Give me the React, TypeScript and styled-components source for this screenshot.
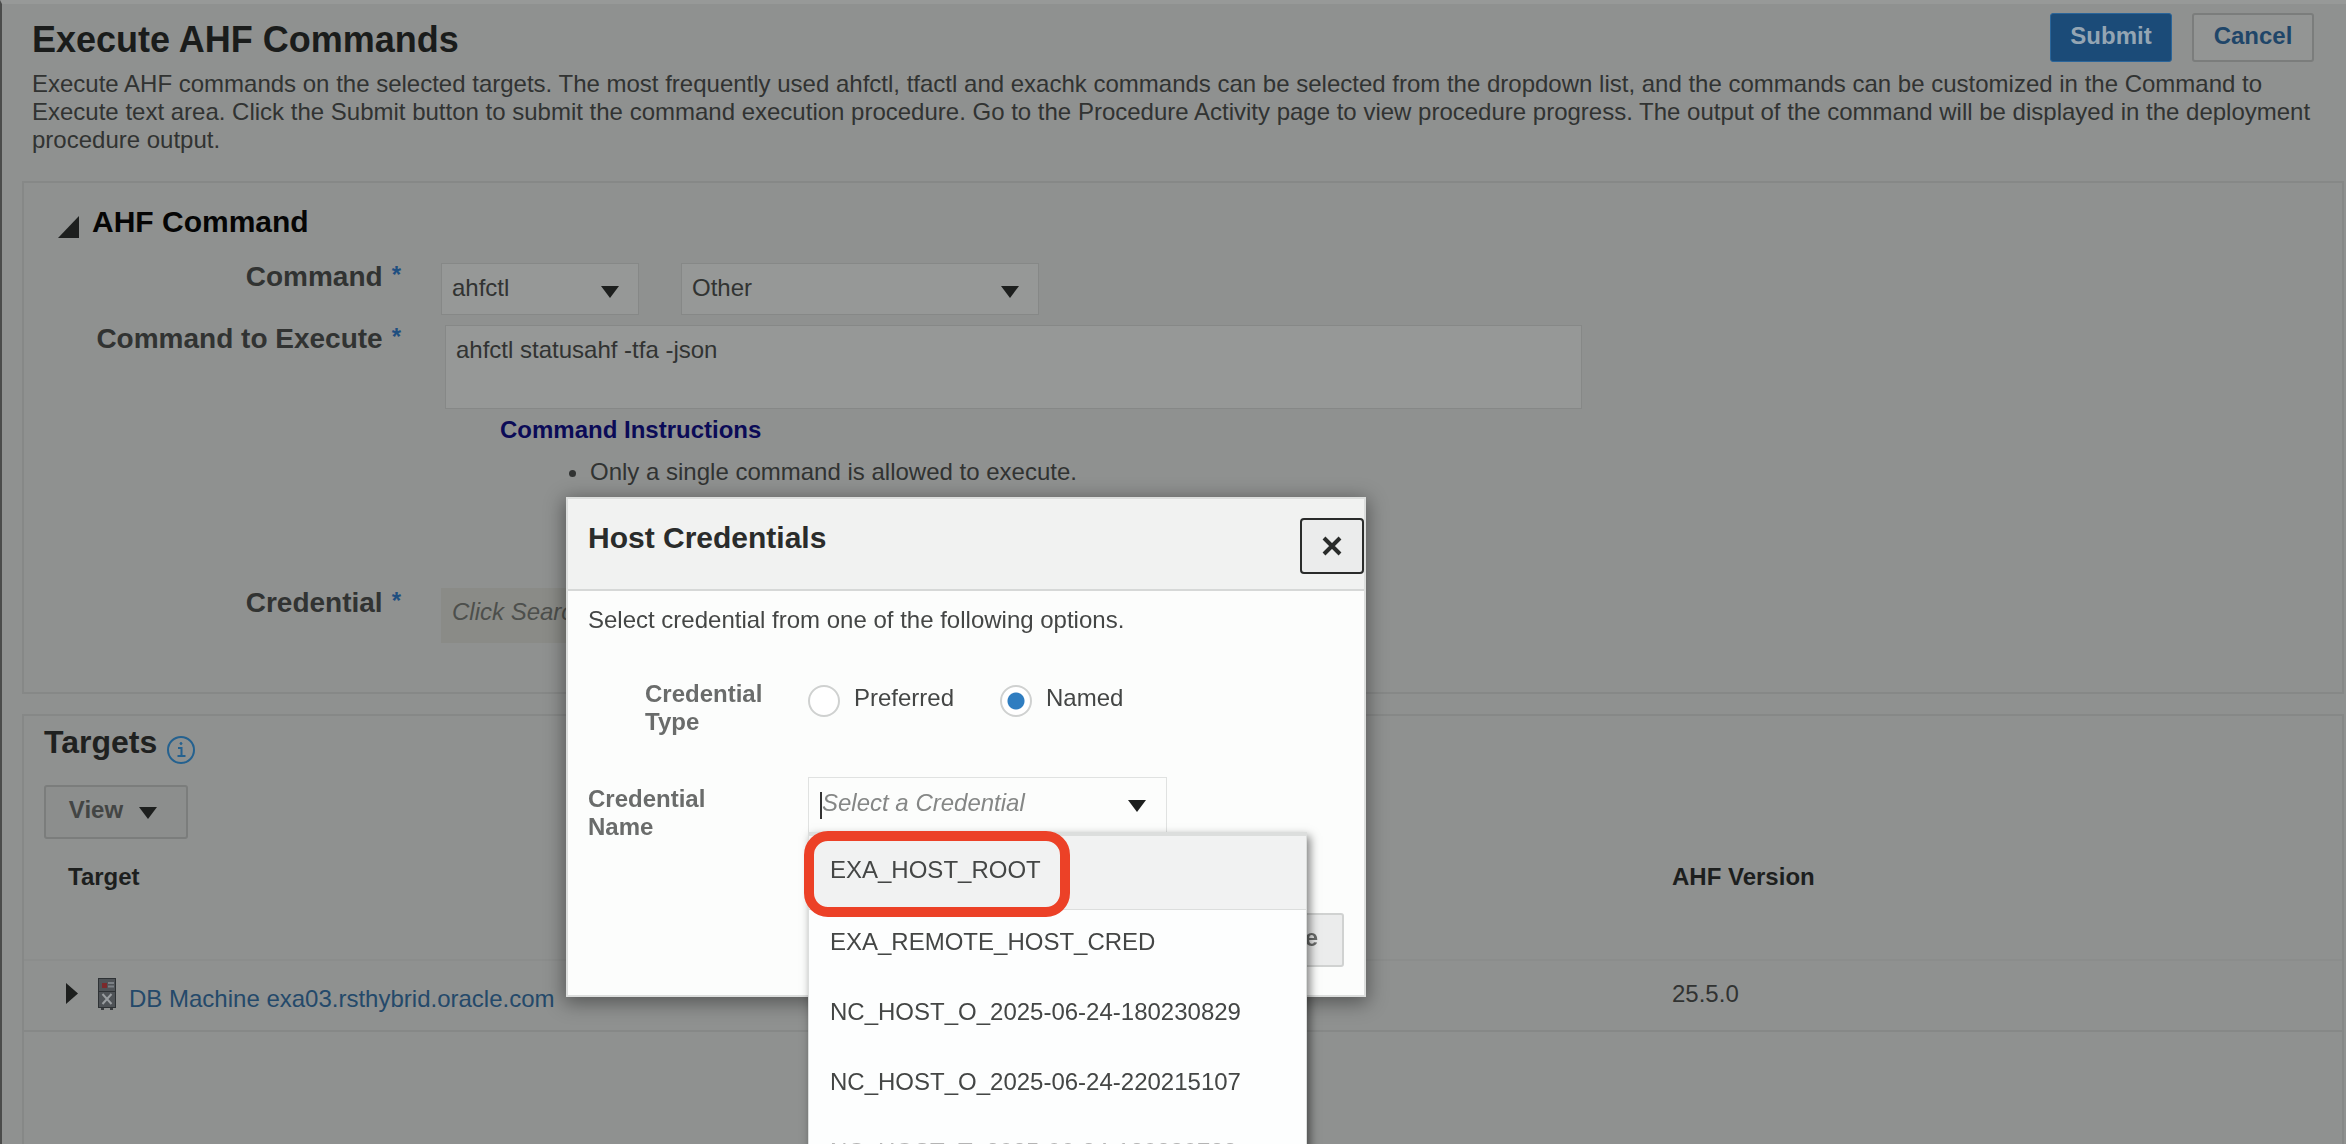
import React from "react";
import styled, { createGlobalStyle, css } from "styled-components";

const GlobalStyle = createGlobalStyle`
  *, *::before, *::after { box-sizing: border-box; }
  body {
    margin: 0;
    background: #8f9190;
    color: #313332;
    font: 24px/28px "Liberation Sans", Arial, Helvetica, sans-serif;
  }
  button, input, select, textarea { font: inherit; color: inherit; margin: 0; }
  h1, h2, p, ul { margin: 0; padding: 0; }
`;

const Page = styled.main`
  display: flex;
  flex-direction: column;
  min-height: 100vh;
  border-left: 2px solid #4b4c4b;
  border-top: 4px solid #979998;
  padding: 9px 2px 0 20px;
`;

const Header = styled.header`
  display: flex;
  justify-content: space-between;
  align-items: flex-start;
  padding: 0 30px 0 10px;
`;

const Title = styled.h1`
  margin-top: 7px;
  font-size: 36px;
  line-height: 40px;
  color: #1a1c1b;
`;

const Actions = styled.div`
  display: flex;
  gap: 20px;
`;

const ActionButton = styled.button<{ $primary?: boolean }>`
  width: 122px;
  height: 49px;
  padding: 0 0 4px;
  border-radius: 3px;
  font-weight: bold;
  ${(p) =>
    p.$primary
      ? css`
          border: 1px solid #2a659a;
          background: #1b4b78;
          color: #94a5b3;
        `
      : css`
          border: 2px solid #7b7d7c;
          background: #939594;
          color: #1f4669;
        `}
`;

const Description = styled.p`
  margin-top: 8px;
  padding: 0 30px 0 10px;
`;

const Panel = styled.section<{ $fill?: boolean }>`
  border: 2px solid #868887;
  ${(p) =>
    p.$fill
      ? css`
          flex: 1;
          margin-top: 20px;
          border-bottom: 0;
          padding-top: 8px;
        `
      : css`
          margin-top: 27px;
          padding: 21px 0 49px;
        `}
`;

const Disclosure = styled.h2`
  display: flex;
  align-items: flex-end;
  gap: 13px;
  padding-left: 34px;
  font-size: 30px;
  line-height: 36px;
  color: #050505;

  svg { margin-bottom: 2px; }
`;

const Form = styled.div`
  display: grid;
  grid-template-columns: 377px 1fr;
  column-gap: 40px;
  row-gap: 8px;
  margin-top: 21px;
`;

const FieldLabel = styled.label<{ $spaced?: boolean }>`
  display: flex;
  justify-content: flex-end;
  align-items: flex-start;
  gap: 9px;
  padding-top: ${(p) => (p.$spaced ? 93 : 0)}px;
  font-size: 28px;
  line-height: 32px;
  font-weight: bold;
`;

const Required = styled.span`
  font-size: 24px;
  line-height: 28px;
  color: #1f4f80;
`;

const Field = styled.div<{ $spaced?: boolean }>`
  display: flex;
  gap: 42px;
  padding-top: ${(p) => (p.$spaced ? 94 : 2)}px;
`;

const SelectBox = styled.span<{ $wide?: boolean }>`
  display: grid;
  align-items: center;
  width: ${(p) => (p.$wide ? 358 : 198)}px;

  > * { grid-area: 1 / 1; }
  svg { justify-self: end; margin: 6px 20px 0 0; pointer-events: none; }
`;

const Select = styled.select`
  appearance: none;
  width: 100%;
  height: 52px;
  padding: 0 44px 2px 10px;
  border: 1px solid #868887;
  border-radius: 0;
  background: #969897;
`;

const CommandField = styled.div`
  padding: 2px 0 0 4px;
`;

const CommandText = styled.textarea`
  display: block;
  width: calc(100% - 760px);
  min-width: 600px;
  height: 84px;
  padding: 10px;
  border: 1px solid #868887;
  background: #969897;
  resize: none;
`;

const Instructions = styled.div`
  padding: 7px 0 0 55px;
  color: #0b0b57;

  ul {
    margin-top: 14px;
    padding-left: 90px;
    color: #313332;
  }
`;

const CredentialInput = styled.input`
  width: 420px;
  height: 55px;
  padding: 0 10px 8px;
  border: 1px solid #8a8b87;
  background: #8a8b87;
  font-style: italic;
  &::placeholder { color: #4d4f4c; opacity: 1; }
`;

const TargetsTitle = styled.h2`
  display: flex;
  align-items: flex-start;
  gap: 9px;
  padding-left: 20px;
  font-size: 32px;
  line-height: 36px;
  color: #1f2120;

  svg { margin-top: 11px; }
`;

const ViewButton = styled.button`
  display: flex;
  align-items: center;
  justify-content: center;
  gap: 16px;
  width: 144px;
  height: 54px;
  margin: 20px 0 0 20px;
  padding: 0 6px 4px 0;
  border: 2px solid #7b7d7c;
  border-radius: 3px;
  background: #8c8e8d;
  color: #434544;
  font-weight: bold;

  svg { margin-top: 6px; color: #1d1f1e; }
`;

const Table = styled.table`
  width: 100%;
  table-layout: fixed;
  border-collapse: collapse;

  th {
    padding: 24px 0 68px;
    text-align: left;
    color: #1d1f1e;
  }
  th:first-child { padding-left: 44px; }
  th:last-child { width: 670px; }
  td {
    height: 71px;
    padding: 0 0 4px;
    border-top: 2px solid #8b8d8c;
    border-bottom: 2px solid #868887;
  }
`;

const TargetCell = styled.div`
  display: flex;
  align-items: center;
  padding-left: 42px;

  a {
    margin-left: 13px;
    padding-top: 10px;
    color: #24496a;
    text-decoration: none;
  }
`;

const Expander = styled.button`
  display: flex;
  margin-right: 20px;
  padding: 0;
  border: 0;
  background: none;
  color: #1d1f1e;
`;

const Overlay = styled.div`
  position: fixed;
  inset: 0;
  overflow: hidden;
  padding: 497px 0 0 566px;
`;

const Dialog = styled.section`
  width: 800px;
  border: 2px solid #dcdedd;
  background: #fcfdfc;
  color: #444645;
  box-shadow: 0 4px 18px 2px rgba(0, 0, 0, 0.4);
`;

const DialogHeader = styled.header`
  display: flex;
  justify-content: space-between;
  align-items: center;
  height: 92px;
  padding-left: 20px;
  border-bottom: 2px solid #d6d8d7;
  background: #f1f2f1;

  h2 {
    padding-bottom: 12px;
    font-size: 30px;
    line-height: 36px;
    color: #2a2c2b;
  }
`;

const CloseButton = styled.button`
  display: grid;
  place-items: center;
  width: 64px;
  height: 56px;
  margin-top: 4px;
  padding: 0;
  border: 2px solid #2a2c2b;
  border-radius: 4px;
  background: #ebecec;
`;

const DialogBody = styled.div`
  padding: 15px 20px 28px;
`;

const CredentialRow = styled.div<{ $indent?: boolean }>`
  display: grid;
  grid-template-columns: ${(p) => (p.$indent ? 163 : 220)}px 1fr;
  align-items: start;
  margin: ${(p) => (p.$indent ? "46px 0 0 57px" : "41px 0 0")};
  color: #6a6c6b;
  font-weight: bold;
`;

const RowLabel = styled.label`
  width: 140px;
  padding-top: 8px;
`;

const GroupLabel = styled.div`
  width: 140px;
`;

const Radios = styled.div`
  display: flex;
  gap: 44px;
  padding-top: 4px;
`;

const RadioLabel = styled.label`
  display: flex;
  align-items: center;
  gap: 14px;
  width: 148px;
  color: #444645;
  font-weight: normal;

  span { padding-bottom: 5px; }
`;

const Radio = styled.input`
  appearance: none;
  flex: none;
  width: 32px;
  height: 32px;
  border: 2px solid #cfd1d0;
  border-radius: 50%;
  background: #fff;

  &:checked { background: radial-gradient(circle, #2f7dc0 8px, #fff 9px); }
`;

const Combo = styled.div`
  position: relative;
  width: 359px;
  color: #333534;
  font-weight: normal;
`;

const ComboBox = styled.div`
  display: flex;
  align-items: center;
  height: 56px;
  padding: 0 20px 0 11px;
  border: 1px solid #e0e2e1;
  background: #fcfdfc;

  svg { margin-top: 2px; }
`;

const Caret = styled.span`
  width: 2px;
  height: 27px;
  background: #333;
`;

const ComboInput = styled.input`
  flex: 1;
  min-width: 0;
  padding: 0 0 5px;
  border: 0;
  outline: 0;
  background: none;
  font-style: italic;
  &::placeholder { color: #858786; opacity: 1; }
`;

const Options = styled.ul`
  position: absolute;
  top: 55px;
  left: 0;
  width: 499px;
  border: solid #dcdedd;
  border-width: 4px 1px 0;
  background: #fdfefe;
  box-shadow: 3px 4px 9px rgba(0, 0, 0, 0.5);
  list-style: none;
`;

const Option = styled.li<{ $active?: boolean; $faded?: boolean }>`
  height: 70px;
  padding: 18px 21px 0;
  color: ${(p) => (p.$faded ? "#b4b4b4" : "#444645")};
  ${(p) =>
    p.$active &&
    css`
      height: 74px;
      padding-top: 20px;
      border-bottom: 1px solid #dcdedd;
      background: #f1f2f2;
    `}
`;

const Highlight = styled.span`
  position: absolute;
  top: -5px;
  left: -5px;
  width: 266px;
  height: 86px;
  border: 10px solid #ec4127;
  border-radius: 24px;
  pointer-events: none;
`;

const DialogFooter = styled.footer`
  display: flex;
  justify-content: flex-end;
  margin-top: 72px;
`;

const FooterButton = styled.button`
  height: 54px;
  padding: 0 24px 5px;
  border: 2px solid #d0d2d1;
  border-radius: 3px;
  background: #ebecec;
  color: #6a6c6b;
  font-weight: bold;
`;

const DownArrow = () => (
  <svg width="18" height="12" viewBox="0 0 18 12" aria-hidden="true">
    <path d="M0 0h18L9 12z" fill="#1d1f1e" />
  </svg>
);

const InfoIcon = () => (
  <svg width="30" height="30" viewBox="0 0 30 30" fill="none" stroke="#24618f" strokeWidth="2" aria-hidden="true">
    <circle cx="15" cy="15" r="13" />
    <path d="M12 13h3.5v8M11.500 21h8" />
    <circle cx="15" cy="8.500" r="1" fill="#24618f" stroke="#24618f" strokeWidth="1" />
  </svg>
);

const MachineIcon = () => (
  <svg width="18" height="32" viewBox="0 0 18 32" aria-hidden="true">
    <path d="M3 29h3v3H3zM12 29h3v3h-3z" fill="#3a3d40" />
    <rect x="0.500" y="0.500" width="17" height="29" fill="#4f5357" stroke="#2e3235" />
    <path d="M10 5h6M10 8.500h6" stroke="#7b8085" strokeWidth="2" />
    <rect x="4" y="5" width="5" height="5" fill="#7c2a2c" />
    <path d="M1 13.500h16" stroke="#2e3235" />
    <path d="M4.500 16l9 10M13.500 16l-9 10" stroke="#999da0" strokeWidth="2" />
  </svg>
);

const credentials = [
  "EXA_HOST_ROOT",
  "EXA_REMOTE_HOST_CRED",
  "NC_HOST_O_2025-06-24-180230829",
  "NC_HOST_O_2025-06-24-220215107",
  "NC_HOST_T_2025-06-24-180230728",
];

export default function App() {
  return (
    <>
      <GlobalStyle />
      <Page>
        <Header>
          <Title>Execute AHF Commands</Title>
          <Actions>
            <ActionButton $primary>Submit</ActionButton>
            <ActionButton>Cancel</ActionButton>
          </Actions>
        </Header>
        <Description>
          Execute AHF commands on the selected targets. The most frequently used ahfctl, tfactl and exachk commands
          can be selected from the dropdown list, and the commands can be customized in the Command to Execute text
          area. Click the Submit button to submit the command execution procedure. Go to the Procedure Activity page
          to view procedure progress. The output of the command will be displayed in the deployment procedure output.
        </Description>

        <Panel>
          <Disclosure>
            <svg width="21" height="22" viewBox="0 0 21 22" aria-hidden="true">
              <path d="M21 0v22H0z" fill="#1d1f1e" />
            </svg>
            AHF Command
          </Disclosure>
          <Form>
            <FieldLabel htmlFor="command">
              Command <Required>*</Required>
            </FieldLabel>
            <Field>
              <SelectBox>
                <Select id="command">
                  <option>ahfctl</option>
                </Select>
                <DownArrow />
              </SelectBox>
              <SelectBox $wide>
                <Select aria-label="Command option">
                  <option>Other</option>
                </Select>
                <DownArrow />
              </SelectBox>
            </Field>

            <FieldLabel htmlFor="execute">
              Command to Execute <Required>*</Required>
            </FieldLabel>
            <CommandField>
              <CommandText id="execute" defaultValue="ahfctl statusahf -tfa -json" />
              <Instructions>
                <strong>Command Instructions</strong>
                <ul>
                  <li>Only a single command is allowed to execute.</li>
                </ul>
              </Instructions>
            </CommandField>

            <FieldLabel htmlFor="credential" $spaced>
              Credential <Required>*</Required>
            </FieldLabel>
            <Field $spaced>
              <CredentialInput id="credential" placeholder="Click Search" readOnly />
            </Field>
          </Form>
        </Panel>

        <Panel $fill>
          <TargetsTitle>
            Targets <InfoIcon />
          </TargetsTitle>
          <ViewButton>
            View <DownArrow />
          </ViewButton>
          <Table>
            <thead>
              <tr>
                <th>Target</th>
                <th>AHF Version</th>
              </tr>
            </thead>
            <tbody>
              <tr>
                <td>
                  <TargetCell>
                    <Expander aria-label="Expand">
                      <svg width="12" height="21" viewBox="0 0 12 21" aria-hidden="true">
                        <path d="M0 0l12 10.500L0 21z" fill="currentColor" />
                      </svg>
                    </Expander>
                    <MachineIcon />
                    <a href="#target">DB Machine exa03.rsthybrid.oracle.com</a>
                  </TargetCell>
                </td>
                <td>25.5.0</td>
              </tr>
            </tbody>
          </Table>
        </Panel>
      </Page>

      <Overlay>
        <Dialog role="dialog" aria-modal="true" aria-labelledby="dialog-title">
          <DialogHeader>
            <h2 id="dialog-title">Host Credentials</h2>
            <CloseButton aria-label="Close dialog">
              <svg width="20" height="20" viewBox="0 0 20 20" aria-hidden="true">
                <path d="M2 2l16 16M18 2L2 18" stroke="#2a2c2b" strokeWidth="4" />
              </svg>
            </CloseButton>
          </DialogHeader>
          <DialogBody>
            <p>Select credential from one of the following options.</p>
            <CredentialRow $indent role="radiogroup" aria-labelledby="type-label">
              <GroupLabel id="type-label">Credential Type</GroupLabel>
              <Radios>
                <RadioLabel>
                  <Radio type="radio" name="type" />
                  <span>Preferred</span>
                </RadioLabel>
                <RadioLabel>
                  <Radio type="radio" name="type" defaultChecked />
                  <span>Named</span>
                </RadioLabel>
              </Radios>
            </CredentialRow>
            <CredentialRow>
              <RowLabel htmlFor="credential-name">Credential Name</RowLabel>
              <Combo>
                <ComboBox>
                  <Caret />
                  <ComboInput
                    id="credential-name"
                    role="combobox"
                    aria-expanded="true"
                    aria-controls="credential-options"
                    placeholder="Select a Credential"
                  />
                  <DownArrow />
                </ComboBox>
                <Options id="credential-options" role="listbox">
                  {credentials.map((name, i) => (
                    <Option
                      key={name}
                      role="option"
                      aria-selected={i === 0}
                      $active={i === 0}
                      $faded={i === credentials.length - 1}
                    >
                      {name}
                    </Option>
                  ))}
                  <Highlight aria-hidden="true" />
                </Options>
              </Combo>
            </CredentialRow>
            <DialogFooter>
              <FooterButton>Close</FooterButton>
            </DialogFooter>
          </DialogBody>
        </Dialog>
      </Overlay>
    </>
  );
}
